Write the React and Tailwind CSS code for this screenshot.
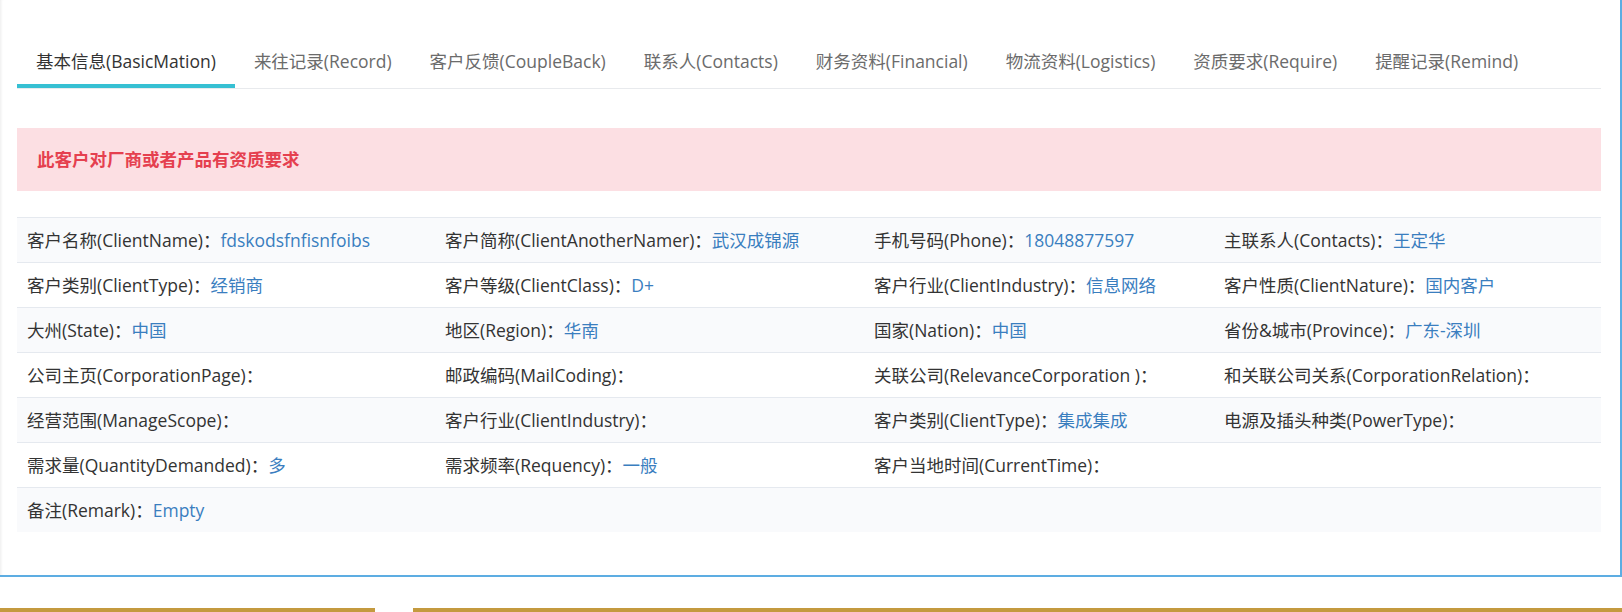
const tabs = [
  '基本信息(BasicMation)',
  '来往记录(Record)',
  '客户反馈(CoupleBack)',
  '联系人(Contacts)',
  '财务资料(Financial)',
  '物流资料(Logistics)',
  '资质要求(Require)',
  '提醒记录(Remind)',
]

const rows = [
  [
    ['客户名称(ClientName)', 'fdskodsfnfisnfoibs'],
    ['客户简称(ClientAnotherNamer)', '武汉成锦源'],
    ['手机号码(Phone)', '18048877597'],
    ['主联系人(Contacts)', '王定华'],
  ],
  [
    ['客户类别(ClientType)', '经销商'],
    ['客户等级(ClientClass)', 'D+'],
    ['客户行业(ClientIndustry)', '信息网络'],
    ['客户性质(ClientNature)', '国内客户'],
  ],
  [
    ['大州(State)', '中国'],
    ['地区(Region)', '华南'],
    ['国家(Nation)', '中国'],
    ['省份&城市(Province)', '广东-深圳'],
  ],
  [
    ['公司主页(CorporationPage)', ''],
    ['邮政编码(MailCoding)', ''],
    ['关联公司(RelevanceCorporation )', ''],
    ['和关联公司关系(CorporationRelation)', ''],
  ],
  [
    ['经营范围(ManageScope)', ''],
    ['客户行业(ClientIndustry)', ''],
    ['客户类别(ClientType)', '集成集成'],
    ['电源及插头种类(PowerType)', ''],
  ],
  [
    ['需求量(QuantityDemanded)', '多'],
    ['需求频率(Requency)', '一般'],
    ['客户当地时间(CurrentTime)', ''],
    null,
  ],
]

function Field({ label, value }) {
  return (
    <div className="flex items-center h-full pl-[10px] whitespace-nowrap">
      <span className="text-[#333]">{label}：</span>
      {value && <span className="text-[#3a7ebf]">{value}</span>}
    </div>
  )
}

export default function App() {
  return (
    <div
      className="w-[1622px] h-[612px] bg-white overflow-hidden"
      style={{ fontFamily: '"Open Sans", "Noto Sans CJK SC", sans-serif' }}
    >
      {/* Panel */}
      <div className="h-[577px] border-r-2 border-b-2 border-[#5dade2] shadow-[inset_3px_0_3px_-2px_rgba(0,0,0,0.08)] pt-[38px] pl-[17px] pr-[19px] text-[17.5px]">
        {/* Tabs */}
        <div className="flex h-[51px] border-b border-[#e8eaed]">
          {tabs.map((t, i) => (
            <div
              key={t}
              className={`flex items-center px-[19px] h-[50px] border-b-[4px] ${
                i === 0 ? 'border-[#36c0d3] text-[#333]' : 'border-transparent text-[#6b6b6b]'
              }`}
            >
              {t}
            </div>
          ))}
        </div>

        {/* Alert */}
        <div className="mt-[39px] h-[63px] bg-[#fcdfe3] flex items-center pl-[20px]">
          <span className="text-[#e5404f] font-bold">此客户对厂商或者产品有资质要求</span>
        </div>

        {/* Info table */}
        <div className="mt-[26px] border-t border-[#e5e9ef]">
          {rows.map((r, i) => (
            <div
              key={i}
              className={`grid grid-cols-[418px_429px_350px_1fr] h-[45px] border-b border-[#e5e9ef] ${
                i % 2 === 0 ? 'bg-[#f9fafc]' : 'bg-white'
              }`}
            >
              {r.map((c, j) => (c ? <Field key={j} label={c[0]} value={c[1]} /> : <div key={j} />))}
            </div>
          ))}
          <div className="h-[44px] bg-[#f9fafc]">
            <Field label="备注(Remark)" value="Empty" />
          </div>
        </div>
      </div>

      {/* Bottom bars */}
      <div className="flex mt-[31px] h-[4px]">
        <div className="w-[375px] bg-[#c49a3f]" />
        <div className="w-[38px]" />
        <div className="flex-1 bg-[#c49a3f]" />
      </div>
    </div>
  )
}
